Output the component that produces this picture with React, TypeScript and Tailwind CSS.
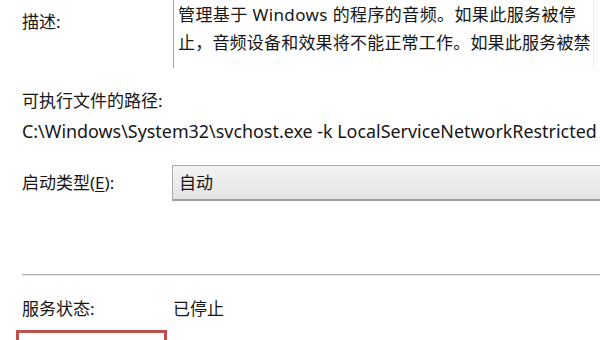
import React from "react";

export default function App() {
  return (
    <div className="w-[600px] h-[340px] overflow-hidden bg-white text-[#161616] text-[17px] font-['Noto_Sans','Noto_Sans_CJK_SC',sans-serif]">
      <div className="flex h-[68px]">
        <div className="w-[173px] shrink-0 pl-[22px] pt-[8px] leading-[28px]">描述:</div>
        <div className="flex-1 mr-[6px] border-l border-[#a3a3a3] border-r border-r-[#ececec] pl-[4px] pt-[1px] leading-[28px] whitespace-nowrap overflow-hidden">
          <div className="tracking-[0.4px]">管理基于 Windows 的程序的音频。如果此服务被停</div>
          <div className="tracking-[0.2px]">止，音频设备和效果将不能正常工作。如果此服务被禁</div>
        </div>
      </div>
      <div className="mt-[19px] pl-[22px] leading-[28px]">可执行文件的路径:</div>
      <div className="mt-[2px] pl-[22px] leading-[28px] whitespace-nowrap text-[17.9px]">
        C:\Windows\System32\svchost.exe -k LocalServiceNetworkRestricted
      </div>
      <div className="mt-[20px] flex items-center h-[36px]">
        <div className="w-[172px] shrink-0 pl-[22px] leading-[28px]">
          启动类型(<span className="underline underline-offset-2">E</span>):
        </div>
        <div className="flex-1 h-[36px] flex items-center pl-[6px] border border-r-0 border-[#acacac] border-b-[#9e9e9e] border-b-2 bg-gradient-to-b from-[#f3f3f3] to-[#e4e4e4]">
          自动
        </div>
      </div>
      <div className="mt-[73px] ml-[22px] h-[2px] bg-[#b4b4b4] border-b border-[#e6e6e6]"></div>
      <div className="mt-[19px] flex leading-[28px]">
        <div className="w-[173px] shrink-0 pl-[22px]">服务状态:</div>
        <div>已停止</div>
      </div>
      <div className="mt-[7px] ml-[16px] w-[151px] h-[30px] border-[3px] border-[#bf4f4b]"></div>
    </div>
  );
}
